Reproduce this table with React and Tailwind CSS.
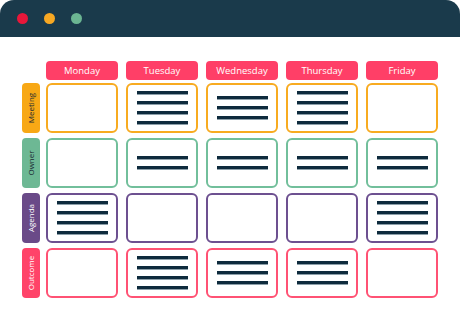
import React from 'react';

const days = ['Monday', 'Tuesday', 'Wednesday', 'Thursday', 'Friday'];

// each row: label, colours and the number of lines per day
const rows = [
  { label: 'Meeting', fill: 'bg-[#f8a815]', text: 'text-[#1a2a33]', border: 'border-[#f8ab20]', lines: [0, 4, 3, 4, 0] },
  { label: 'Owner', fill: 'bg-[#6db894]', text: 'text-[#1a2a33]', border: 'border-[#72bf9b]', lines: [0, 2, 2, 2, 2] },
  { label: 'Agenda', fill: 'bg-[#6a4a88]', text: 'text-white', border: 'border-[#6d5090]', lines: [4, 0, 0, 0, 4] },
  { label: 'Outcome', fill: 'bg-[#ff4369]', text: 'text-white', border: 'border-[#ff5274]', lines: [0, 4, 3, 3, 0] },
];

function Cell({ border, count }) {
  return (
    <div className={`w-[72px] h-[50px] rounded-[6px] border-2 ${border} bg-white flex flex-col items-center justify-center gap-[6px]`}>
      {Array.from({ length: count }).map((_, i) => (
        <div key={i} className="w-[51px] h-[4px] bg-[#0e2b3d] border-b border-[#8da0aa]" />
      ))}
    </div>
  );
}

export default function App() {
  return (
    <div className="w-[460px] h-[324px] bg-white overflow-hidden" style={{ fontFamily: '"Open Sans", "Noto Sans", sans-serif' }}>
      {/* window bar */}
      <div className="h-[37px] bg-[#1a3a4b] rounded-t-[14px] flex items-center gap-[16px] pl-[17px]">
        <span className="w-[11px] h-[11px] rounded-full bg-[#e8173a]" />
        <span className="w-[11px] h-[11px] rounded-full bg-[#f7a823]" />
        <span className="w-[11px] h-[11px] rounded-full bg-[#6bb592]" />
      </div>

      <div className="pl-[22px] pt-[24px]">
        {/* day headers */}
        <div className="flex gap-2 ml-[24px] mb-[3px]">
          {days.map((d) => (
            <div key={d} className="w-[72px] h-[19px] rounded-[4px] bg-[#ff3f67] text-white text-[9.5px] flex items-center justify-center leading-none">
              {d}
            </div>
          ))}
        </div>

        <div className="flex flex-col gap-[5px]">
          {rows.map((r) => (
            <div key={r.label} className="flex">
              <div className={`w-[18px] h-[50px] rounded-[4px] ${r.fill} ${r.text} flex items-center justify-center mr-[6px]`}>
                <span className="text-[8px] font-medium leading-none whitespace-nowrap -rotate-90 block">{r.label}</span>
              </div>
              <div className="flex gap-2">
                {r.lines.map((n, i) => (
                  <Cell key={i} border={r.border} count={n} />
                ))}
              </div>
            </div>
          ))}
        </div>
      </div>
    </div>
  );
}
